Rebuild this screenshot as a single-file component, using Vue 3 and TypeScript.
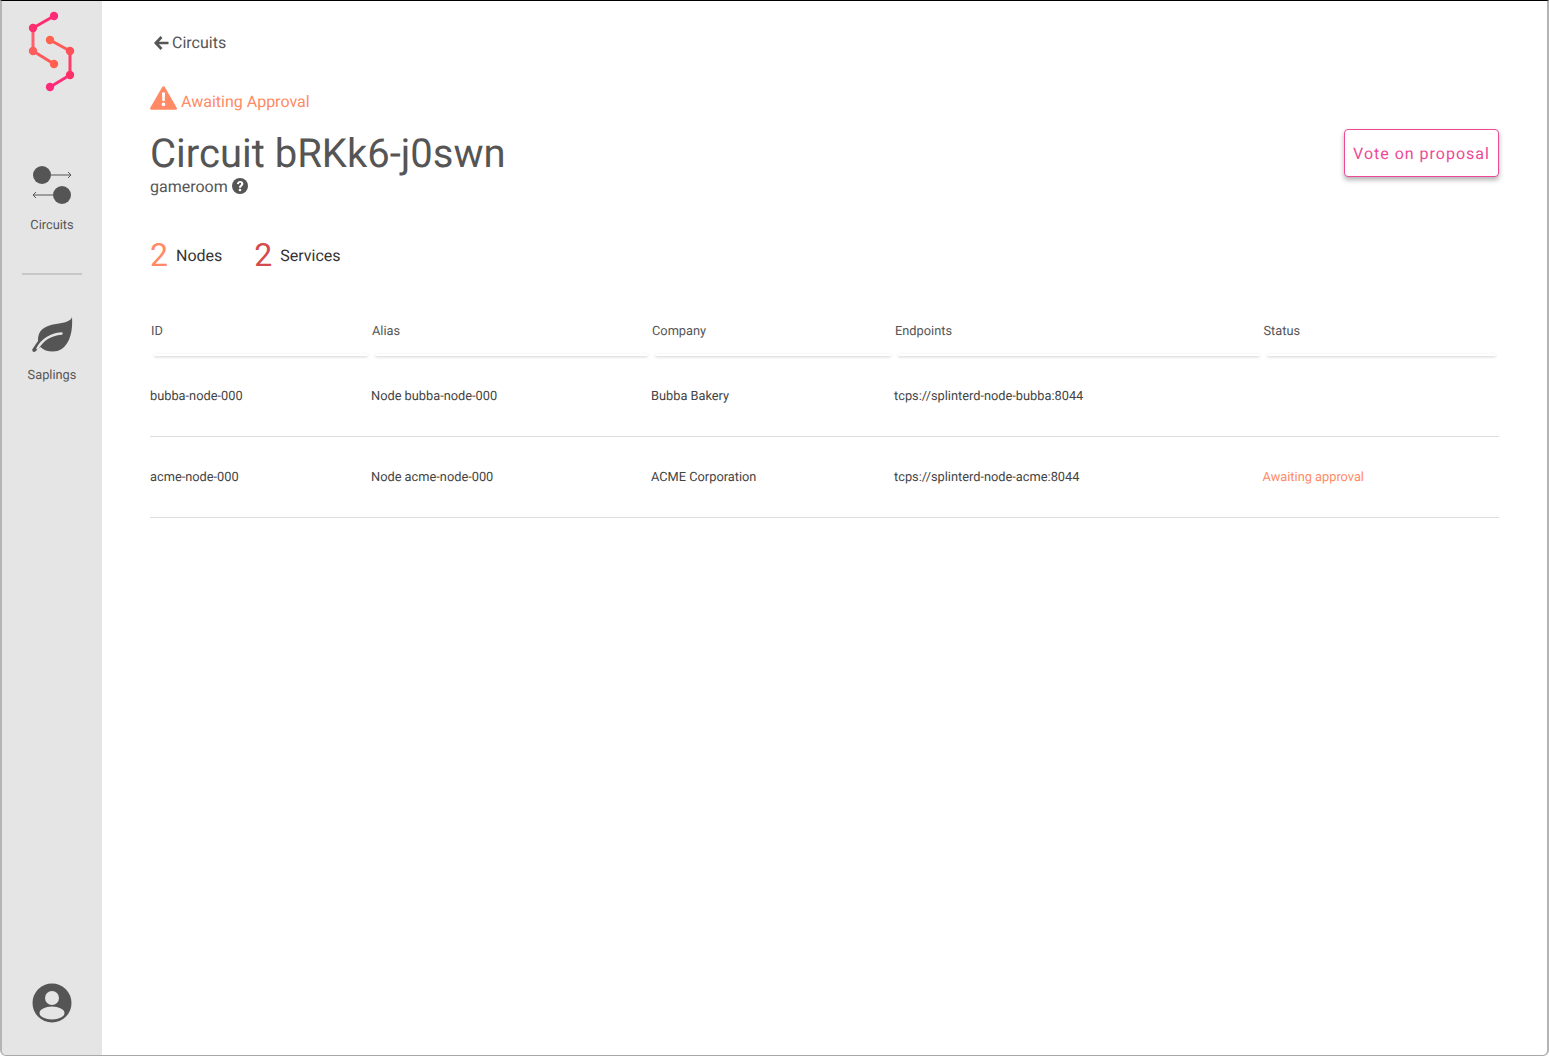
<script setup lang="ts">
interface NodeRow { id: string; alias: string; company: string; endpoint: string; status: string }
const columns: string[] = ['ID', 'Alias', 'Company', 'Endpoints', 'Status']
const rows: NodeRow[] = [
  { id: 'bubba-node-000', alias: 'Node bubba-node-000', company: 'Bubba Bakery', endpoint: 'tcps://splinterd-node-bubba:8044', status: '' },
  { id: 'acme-node-000', alias: 'Node acme-node-000', company: 'ACME Corporation', endpoint: 'tcps://splinterd-node-acme:8044', status: 'Awaiting approval' },
]
</script>

<template>
  <div class="window">
    <aside class="sidebar">
      <svg class="logo" width="100" height="100" viewBox="0 0 100 100">
        <g fill="none" stroke-width="3">
          <path d="M52 15 31 27" stroke="#ff2d70" />
          <path d="M31 27V50" stroke="#ff6070" />
          <path d="M31 50 52 63" stroke="#ff5a5a" />
          <path d="M48 39 68 50" stroke="#ff5c55" />
          <path d="M68 50V74" stroke="#ff3d68" />
          <path d="M68 74 48 86" stroke="#ff2d78" />
        </g>
        <circle cx="52" cy="15" r="4.200" fill="#ff2a78" />
        <circle cx="31" cy="27" r="4.200" fill="#ff2e6e" />
        <circle cx="31" cy="50" r="4.200" fill="#ff5c5c" />
        <circle cx="52" cy="63" r="4.200" fill="#ff6150" />
        <circle cx="48" cy="39" r="4.200" fill="#ff6350" />
        <circle cx="68" cy="50" r="4.200" fill="#ff5058" />
        <circle cx="68" cy="74" r="4.200" fill="#ff3068" />
        <circle cx="48" cy="86" r="4.200" fill="#ff2a7c" />
      </svg>

      <div class="nav-item circuits">
        <svg width="100" height="44" viewBox="0 0 100 44">
          <circle cx="40" cy="11" r="9" fill="#555" />
          <path d="M49 11H69M66 8 69 11l-3 3" fill="none" stroke="#555" stroke-width="1" />
          <circle cx="60" cy="31" r="9" fill="#555" />
          <path d="M51 31H31M34 28 31 31l3 3" fill="none" stroke="#555" stroke-width="1" />
        </svg>
        <span>Circuits</span>
      </div>

      <div class="divider"></div>

      <div class="nav-item saplings">
        <svg width="100" height="46" viewBox="0 0 100 46">
          <path d="M70 0C69 4 62 6 54 7 42 8.500 35.500 14 36 24L30.500 32c-1 1.500 1 4 2.800 2.600L38.500 30C41.500 33 45.500 34.500 51 34.500 63 34.500 71.500 22 70 0Z" fill="#555" />
          <path d="M35.500 31.500C41 21.500 49 17.500 59.500 16.500" fill="none" stroke="#e5e5e5" stroke-width="2.400" stroke-linecap="round" />
        </svg>
        <span>Saplings</span>
      </div>

      <svg class="user" width="40" height="40" viewBox="0 0 40 40">
        <defs>
          <clipPath id="uc"><circle cx="20" cy="20" r="19.500" /></clipPath>
        </defs>
        <circle cx="20" cy="20" r="19.500" fill="#555" />
        <g clip-path="url(#uc)" fill="#e5e5e5">
          <circle cx="20" cy="15" r="7" />
          <ellipse cx="20" cy="30" rx="12.500" ry="6.500" />
        </g>
      </svg>
    </aside>

    <main class="content">
      <div class="back">
        <svg class="back-arrow" width="15" height="14" viewBox="0 0 15 14">
          <path d="M7.500 1 1.800 7l5.700 6M2.500 7H14.500" fill="none" stroke="#555" stroke-width="2.700" />
        </svg>
        <span>Circuits</span>
      </div>

      <div class="status-line">
        <svg width="27" height="24" viewBox="0 0 27 24">
          <path d="M13.500 1.500 25.600 22.500H1.400Z" fill="#ff8a65" stroke="#ff8a65" stroke-width="2.600" stroke-linejoin="round" />
          <path d="M11.900 6.500h3.200l-.5 8.500h-2.200Z" fill="#fff" />
          <circle cx="13.500" cy="18.400" r="1.800" fill="#fff" />
        </svg>
        <span class="status-text">Awaiting Approval</span>
      </div>

      <div class="title-row">
        <div>
          <h1>Circuit bRKk6-j0swn</h1>
          <div class="type">
            <span>gameroom</span>
            <svg class="help" width="16" height="16" viewBox="0 0 16 16">
              <circle cx="8" cy="8" r="8" fill="#555" />
              <path d="M4.900 6C5.100 4.100 6.500 3 8.200 3c1.800 0 3.200 1.200 3.200 2.800 0 2.300-2.300 2.300-2.300 3.900H7C7 7.200 9.100 7.100 9.100 5.800 9.100 5.100 8.700 4.800 8.100 4.800S7 5.300 6.900 6.300Z" fill="#fff" />
              <circle cx="8" cy="12" r="1.300" fill="#fff" />
            </svg>
          </div>
        </div>
        <button class="vote">Vote on proposal</button>
      </div>

      <div class="stats">
        <div class="stat"><span class="num orange">2</span><span>Nodes</span></div>
        <div class="stat"><span class="num red">2</span><span>Services</span></div>
      </div>

      <div class="table">
        <div class="grid head">
          <div v-for="c in columns" :key="c" class="th"><span>{{ c }}</span></div>
        </div>
        <div v-for="r in rows" :key="r.id" class="grid row">
          <div>{{ r.id }}</div>
          <div>{{ r.alias }}</div>
          <div>{{ r.company }}</div>
          <div>{{ r.endpoint }}</div>
          <div class="awaiting">{{ r.status }}</div>
        </div>
      </div>
    </main>
  </div>
</template>

<style scoped>
.window {
  box-sizing: border-box;
  width: 1549px;
  height: 1056px;
  display: flex;
  overflow: hidden;
  background: #fff;
  border-top: 1px solid #000;
  border-left: 2px solid #b4b4b4;
  border-right: 2px solid #b4b4b4;
  border-bottom: 1px solid #a8a8a8;
  border-bottom-left-radius: 6px;
  border-bottom-right-radius: 6px;
  font-family: Roboto, sans-serif;
  color: #555;
  text-rendering: geometricPrecision;
}
.sidebar {
  width: 100px;
  flex: none;
  background: #e5e5e5;
  display: flex;
  flex-direction: column;
  align-items: center;
}
.logo { display: block; flex: none; }
.nav-item {
  display: flex;
  flex-direction: column;
  align-items: center;
  font-size: 12.8px;
  line-height: 14px;
}
.nav-item svg { display: block; }
.circuits { margin-top: 63px; gap: 11px; }
.divider {
  width: 60px;
  height: 2px;
  background: #c8c8c8;
  margin-top: 40px;
}
.saplings { margin-top: 42px; gap: 6px; }
.user { margin-top: auto; margin-bottom: 32px; display: block; }
.content {
  flex: 1;
  min-width: 0;
  padding: 32px 48px 0;
}
.back {
  display: flex;
  align-items: center;
  gap: 3px;
  padding-left: 4px;
  font-size: 16px;
  line-height: 20px;
}
.back-arrow { margin-bottom: 1px; }
.status-line {
  display: flex;
  align-items: center;
  gap: 4px;
  margin-top: 33px;
  height: 24px;
  color: #ff8a65;
  font-size: 16px;
}
.status-text { position: relative; top: 3px; }
.title-row {
  display: flex;
  justify-content: space-between;
  align-items: flex-start;
  margin-top: 21px;
}
h1 {
  margin: 0;
  font-size: 40px;
  line-height: 46px;
  font-weight: 400;
  color: #555;
}
.type {
  display: flex;
  align-items: center;
  gap: 4px;
  font-size: 16px;
  line-height: 20px;
}
.type svg { display: block; }
.help { margin-bottom: 2px; }
.vote {
  box-sizing: border-box;
  width: 155px;
  height: 48px;
  margin-top: -2px;
  padding: 0;
  background: #fff;
  border: 1px solid #ec4a96;
  border-radius: 4px;
  color: #ec4a96;
  font-family: Roboto, sans-serif;
  font-size: 16px;
  letter-spacing: 1px;
  text-rendering: geometricPrecision;
  box-shadow: 0 3px 5px rgba(0, 0, 0, 0.3);
}
.stats {
  display: flex;
  gap: 32px;
  margin-top: 39px;
}
.stat {
  display: flex;
  align-items: center;
  gap: 8px;
  font-size: 16px;
  color: #333;
  height: 38px;
}
.num { font-size: 32px; font-weight: 400; line-height: 38px; }
.orange { color: #ff8a65; }
.red { color: #d5494f; }
.table { margin-top: 36px; }
.grid {
  display: grid;
  grid-template-columns: 221px 280px 243px 368.5px 236.5px;
  font-size: 12.8px;
}
.head { height: 46px; }
.th {
  box-sizing: border-box;
  margin: 0 2px 0 0;
  padding: 15px 0 0 1px;
  line-height: 14px;
  color: #555;
  position: relative;
}
.th::after {
  content: '';
  position: absolute;
  left: 4px;
  right: 1px;
  bottom: 0;
  height: 2px;
  background: #fff;
  box-shadow: 0 1px 3px rgba(0, 0, 0, 0.2);
  border-radius: 2px;
}
.row {
  height: 81px;
  align-items: center;
  border-bottom: 1px solid #ddd;
  box-sizing: border-box;
  color: #444;
}
.awaiting { color: #ff8a65; }
</style>

<style>
html, body { margin: 0; background: #fff; }
</style>
